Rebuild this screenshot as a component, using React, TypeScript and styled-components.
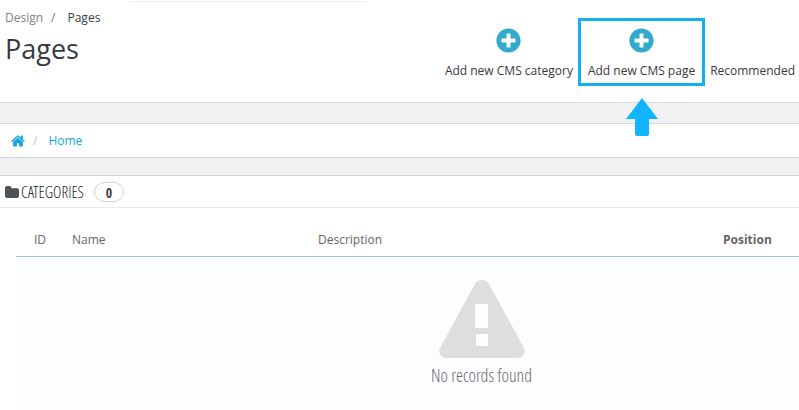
import React from "react";
import styled, { createGlobalStyle } from "styled-components";
import { FaPlusCircle } from "react-icons/fa";

const GlobalStyle = createGlobalStyle`
  *, *::before, *::after { box-sizing: border-box; }
  body {
    margin: 0;
    background: #ffffff;
    color: #363a41;
    font: 12px/16px "Open Sans", "Noto Sans", sans-serif;
    overflow-x: hidden;
  }
  button { font: inherit; color: inherit; }
  a { color: inherit; text-decoration: none; }
`;

const narrow = `"Open Sans Condensed Light", "Open Sans Condensed", "Open Sans", sans-serif`;

const Page = styled.div`
  display: flex;
  flex-direction: column;
`;

const SearchEdge = styled.div`
  width: 240px;
  height: 2px;
  margin-left: 128px;
  border-bottom: 1px solid #ececec;
  border-radius: 0 0 6px 6px;
`;

const Header = styled.header`
  display: flex;
  justify-content: space-between;
  align-items: flex-start;
  padding: 8px 4px 16px 5px;
  border-bottom: 1px solid #d8dadc;
`;

const Crumbs = styled.nav`
  display: flex;
  gap: 8px;
`;

const Crumb = styled.a`
  color: #808286;
`;

const Divider = styled.span<{ $pale?: boolean }>`
  color: ${(p) => (p.$pale ? "#bfc3c6" : "#6c7a60")};
`;

const Current = styled.span`
  margin-left: 4px;
  color: #363a41;
`;

const Title = styled.h1`
  margin: 5px 0 0;
  font-size: 27px;
  line-height: 35px;
  font-weight: 400;
`;

const Toolbar = styled.div`
  display: flex;
  align-items: flex-end;
  gap: 5px;
  padding-top: 8px;
`;

const ToolButton = styled.button<{ $marked?: boolean }>`
  position: relative;
  display: flex;
  flex-direction: column;
  align-items: center;
  justify-content: flex-end;
  gap: 10px;
  height: 68px;
  padding: ${(p) => (p.$marked ? "0 7px 4px" : "0 0 7px")};
  border: ${(p) => (p.$marked ? "3px solid #17b0ee" : "0")};
  background: transparent;
  white-space: nowrap;
  cursor: pointer;
`;

const PlusIcon = styled(FaPlusCircle)`
  width: 25px;
  height: 25px;
  color: #31aacb;
`;

const Pointer = styled.svg`
  position: absolute;
  top: 77px;
  left: 50%;
  margin-left: -16px;
  z-index: 1;
`;

const Main = styled.main`
  display: flex;
  flex-direction: column;
  gap: 17px;
  padding-top: 20px;
  background: #eff1f2;
`;

const PathBar = styled.nav`
  display: flex;
  align-items: center;
  gap: 8px;
  height: 35px;
  padding-left: 11px;
  border: solid #d0d7da;
  border-width: 1px 0;
  background: #ffffff;
  color: #12a8de;
`;

const PathLink = styled.a`
  display: flex;
`;

const HomeText = styled(PathLink)`
  margin-left: 3px;
`;

const Panel = styled.section`
  border-top: 1px solid #d0d7da;
  background: #ffffff;
`;

const PanelHeading = styled.h2`
  display: flex;
  align-items: center;
  gap: 2px;
  height: 32px;
  margin: 0;
  padding-left: 5px;
  border-bottom: 1px solid #eaeaea;
  color: #222426;
  font: 400 16px/20px ${narrow};

  > svg { color: #505356; }
`;

const Count = styled.span`
  width: 30px;
  height: 20px;
  margin-left: 8px;
  border: 1px solid #cfd5d8;
  border-radius: 10px;
  color: #444749;
  text-align: center;
  font: 700 14px/20px "Open Sans Condensed", "Open Sans", sans-serif;
`;

const PanelBody = styled.div`
  padding: 12px 0 0 16px;
`;

const Table = styled.table`
  width: 100%;
  border-collapse: separate;
  border-spacing: 0;
  table-layout: fixed;
`;

const HeadCell = styled.th<{ $strong?: boolean }>`
  height: 37px;
  padding: 5px 0 2px 18px;
  border-bottom: 1px solid #a0cbd2;
  color: #666666;
  text-align: left;
  font-weight: ${(p) => (p.$strong ? 700 : 400)};
`;

const EmptyCell = styled.td`
  padding: 23px 0 23px 148px;
  background: #fbfdff;
`;

const Empty = styled.div`
  display: flex;
  flex-direction: column;
  align-items: center;
  gap: 5px;
  color: #6a6c6e;
  font: 400 18px/24px ${narrow};
`;

const HomeIcon = () => (
  <svg width="14" height="14" viewBox="64 128 1664 1536" fill="currentColor" aria-hidden="true">
    <path d="M1472 992v480q0 26-19 45t-45 19h-384v-384h-256v384h-384q-26 0-45-19t-19-45v-480q0-1 .5-3t.5-3l575-474 575 474q1 2 1 6zm223-69l-62 74q-8 9-21 11h-3q-13 0-21-7l-692-577-692 577q-12 8-24 7-13-2-21-11l-62-74q-8-10-7-23.5t11-21.5l719-599q32-26 76-26t76 26l244 204v-195q0-14 9-23t23-9h192q14 0 23 9t9 23v408l219 182q10 8 11 21.5t-7 23.5z" />
  </svg>
);

const FolderIcon = () => (
  <svg width="14" height="12" viewBox="64 128 1664 1408" fill="currentColor" aria-hidden="true">
    <path d="M1728 608v704q0 92-66 158t-158 66h-1216q-92 0-158-66t-66-158v-960q0-92 66-158t158-66h320q92 0 158 66t66 158v32h672q92 0 158 66t66 158z" />
  </svg>
);

const WarningIcon = () => (
  <svg width="86" height="78" viewBox="0 0 86 78" aria-hidden="true">
    <path
      fill="#dedede"
      fillRule="evenodd"
      d="M36 4Q38 0 43 0T50 4L85 68Q87 72 84.500 75Q82.500 78 79 78H7Q3.500 78 1.500 75Q-1 72 1 68ZM36 24V48H49V24ZM37 54V66H49V54Z"
    />
  </svg>
);

export default function App() {
  return (
    <Page>
      <GlobalStyle />
      <SearchEdge />
      <Header>
        <div>
          <Crumbs aria-label="Breadcrumb">
            <Crumb href="#design">Design</Crumb>
            <Divider>/</Divider>
            <Current>Pages</Current>
          </Crumbs>
          <Title>Pages</Title>
        </div>
        <Toolbar>
          <ToolButton type="button">
            <PlusIcon />
            Add new CMS category
          </ToolButton>
          <ToolButton type="button" $marked>
            <PlusIcon />
            Add new CMS page
            <Pointer width="32" height="38" viewBox="0 0 32 38" aria-hidden="true">
              <path fill="#12b4ff" d="M16 0L32 21H23V36Q23 38 21 38H11Q9 38 9 36V21H0Z" />
            </Pointer>
          </ToolButton>
          <ToolButton type="button">Recommended</ToolButton>
        </Toolbar>
      </Header>
      <Main>
        <PathBar aria-label="Category path">
          <PathLink href="#root" aria-label="Root">
            <HomeIcon />
          </PathLink>
          <Divider $pale>/</Divider>
          <HomeText href="#home">Home</HomeText>
        </PathBar>
        <Panel>
          <PanelHeading>
            <FolderIcon />
            CATEGORIES
            <Count>0</Count>
          </PanelHeading>
          <PanelBody>
            <Table>
              <colgroup>
                <col width="38" />
                <col width="246" />
                <col />
                <col width="94" />
              </colgroup>
              <thead>
                <tr>
                  <HeadCell scope="col">ID</HeadCell>
                  <HeadCell scope="col">Name</HeadCell>
                  <HeadCell scope="col">Description</HeadCell>
                  <HeadCell scope="col" $strong>Position</HeadCell>
                </tr>
              </thead>
              <tbody>
                <tr>
                  <EmptyCell colSpan={4}>
                    <Empty>
                      <WarningIcon />
                      No records found
                    </Empty>
                  </EmptyCell>
                </tr>
              </tbody>
            </Table>
          </PanelBody>
        </Panel>
      </Main>
    </Page>
  );
}
